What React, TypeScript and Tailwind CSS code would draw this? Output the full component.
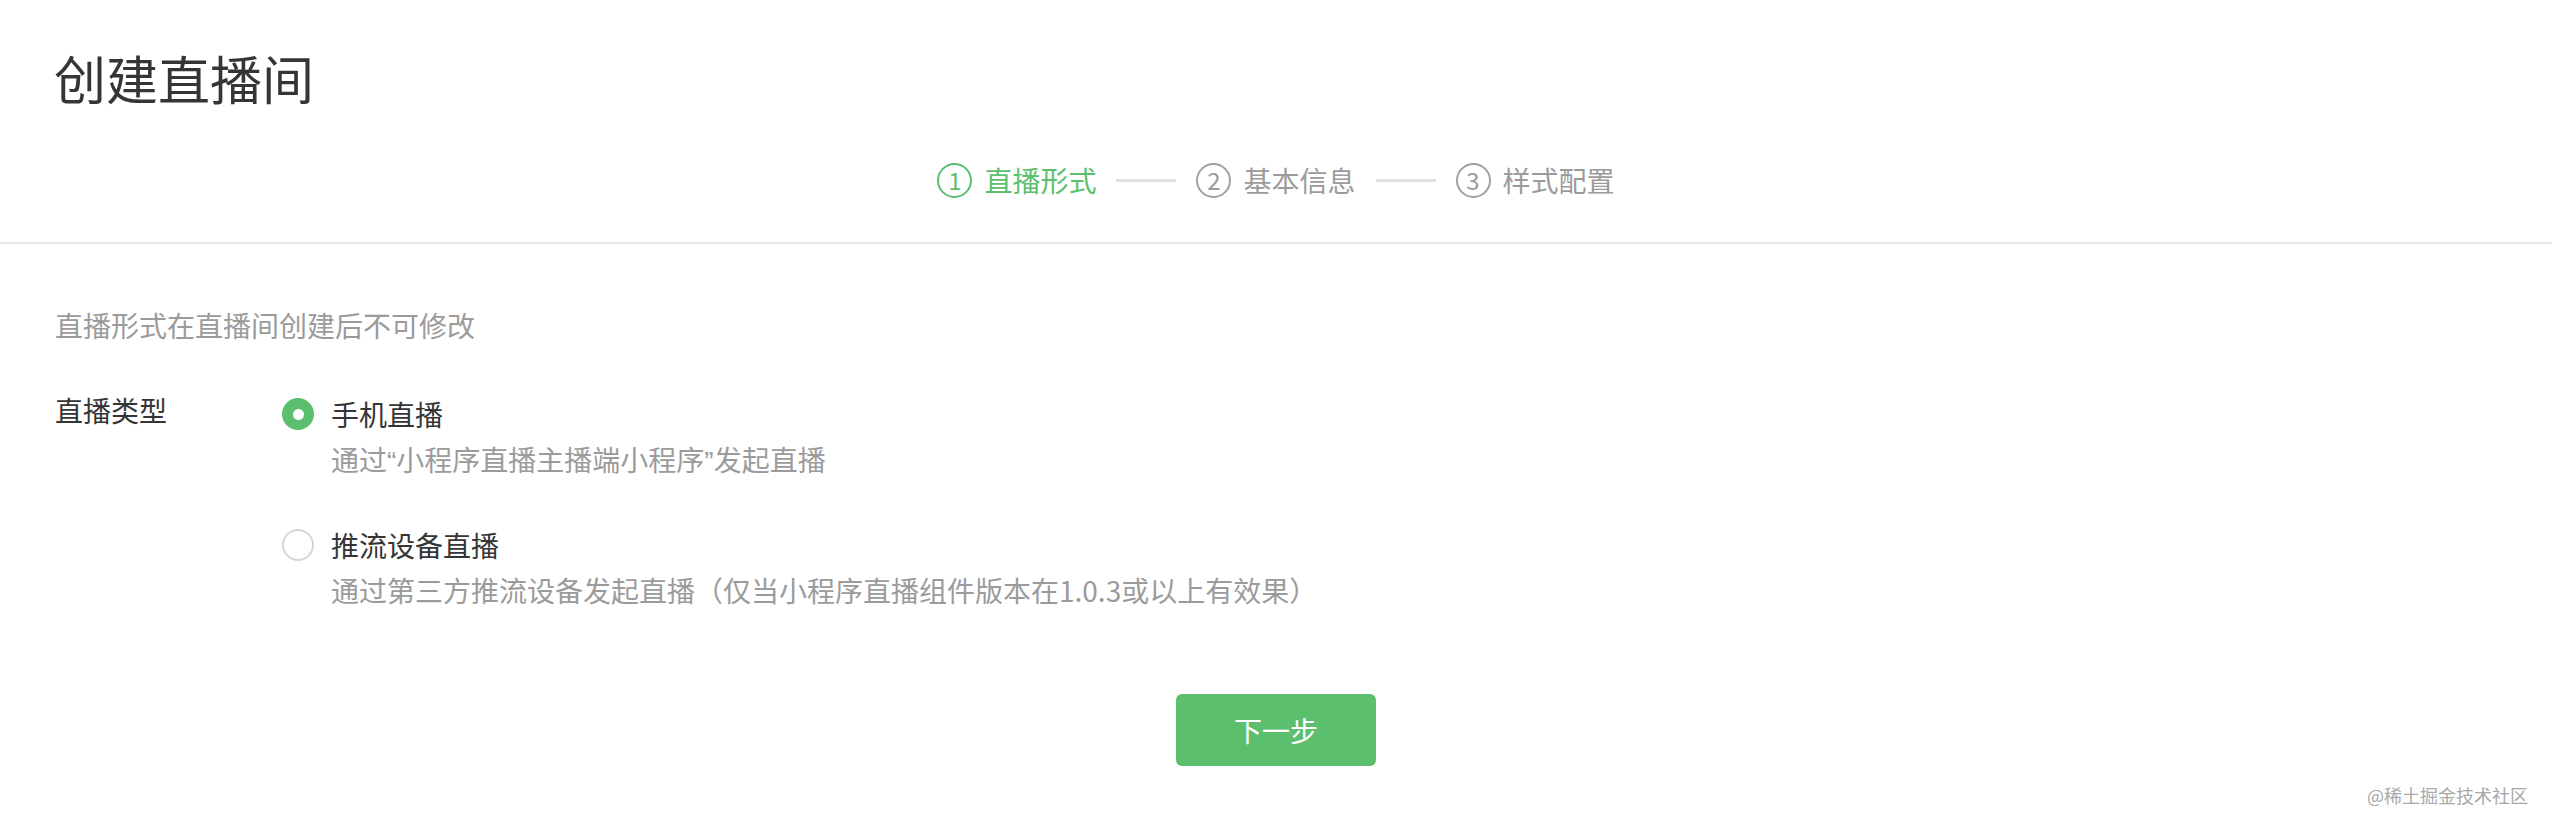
import { useState } from "react";
import type { ReactNode } from "react";

type Option = {
  id: string;
  title: string;
  desc: ReactNode;
};

const steps = ["直播形式", "基本信息", "样式配置"];

// narrow latin quotes, the CJK font makes them full width
const Q = ({ children }: { children: string }) => (
  <span className="leading-none" style={{ fontFamily: '"Liberation Sans", sans-serif' }}>
    {children}
  </span>
);

const options: Option[] = [
  {
    id: "phone",
    title: "手机直播",
    desc: (
      <>
        通过<Q>“</Q>小程序直播主播端小程序<Q>”</Q>发起直播
      </>
    ),
  },
  {
    id: "push",
    title: "推流设备直播",
    desc: "通过第三方推流设备发起直播（仅当小程序直播组件版本在1.0.3或以上有效果）",
  },
];

const Step = ({ index, label, active }: { index: number; label: string; active: boolean }) => (
  <div className={`flex items-center gap-[12px] ${active ? "text-[#5bbf6d]" : "text-[#9b9b9b]"}`}>
    <span
      className={`flex h-[35px] w-[35px] items-center justify-center rounded-full border-2 text-[24px] leading-none ${
        active ? "border-[#5bbf6d]" : "border-[#a0a0a0]"
      }`}
    >
      {index}
    </span>
    <span className="text-[28px] leading-none">{label}</span>
  </div>
);

const Radio = ({ checked }: { checked: boolean }) =>
  checked ? (
    <span className="flex h-[32px] w-[32px] shrink-0 items-center justify-center rounded-full bg-[#5bbf6d]">
      <span className="h-[11px] w-[11px] rounded-full bg-white" />
    </span>
  ) : (
    <span className="h-[32px] w-[32px] shrink-0 rounded-full border-2 border-[#d6d6d6] bg-white" />
  );

const App = () => {
  const [selected, setSelected] = useState("phone");

  return (
    <div
      className="relative h-[826px] w-full bg-white text-[#353535]"
      style={{ fontFamily: '"Noto Sans CJK SC", "Noto Sans", sans-serif' }}
    >
      {/* Header */}
      <div className="border-b-2 border-[#e6e6e6] pb-[44px] pt-[52px]">
        <h1 className="pl-[54px] text-[52px] font-normal leading-none">创建直播间</h1>
        <div className="mt-[58px] flex h-[36px] items-center justify-center">
          {steps.map((s, i) => (
            <div key={s} className="flex items-center">
              {i > 0 && <span className="mx-[20px] h-[3px] w-[60px] bg-[#e2e2e2]" />}
              <Step index={i + 1} label={s} active={i === 0} />
            </div>
          ))}
        </div>
      </div>

      {/* Body */}
      <div className="px-[55px] pt-[67px]">
        <p className="text-[28px] leading-none text-[#9b9b9b]">直播形式在直播间创建后不可修改</p>

        <div className="mt-[51px] flex items-start">
          <div className="w-[227px] shrink-0 text-[28px] leading-[40px]">直播类型</div>
          <div className="flex flex-col gap-[46px] pt-[4px]">
            {options.map((o) => (
              <div key={o.id} className="cursor-pointer" onClick={() => setSelected(o.id)}>
                <div className="flex h-[40px] items-center gap-[17px]">
                  <Radio checked={selected === o.id} />
                  <span className="text-[28px] leading-[40px]">{o.title}</span>
                </div>
                <div className="mt-[5px] h-[40px] pl-[49px] text-[28px] leading-[40px] text-[#9b9b9b]">{o.desc}</div>
              </div>
            ))}
          </div>
        </div>
      </div>

      <div className="mt-[84px] flex justify-center">
        <button className="h-[72px] w-[200px] rounded-[6px] bg-[#5bbf6d] text-[28px] text-white">下一步</button>
      </div>

      <span className="absolute bottom-[22px] right-[24px] text-[18px] leading-none text-[#a8a8a8]">
        @稀土掘金技术社区
      </span>
    </div>
  );
};

export default App;
